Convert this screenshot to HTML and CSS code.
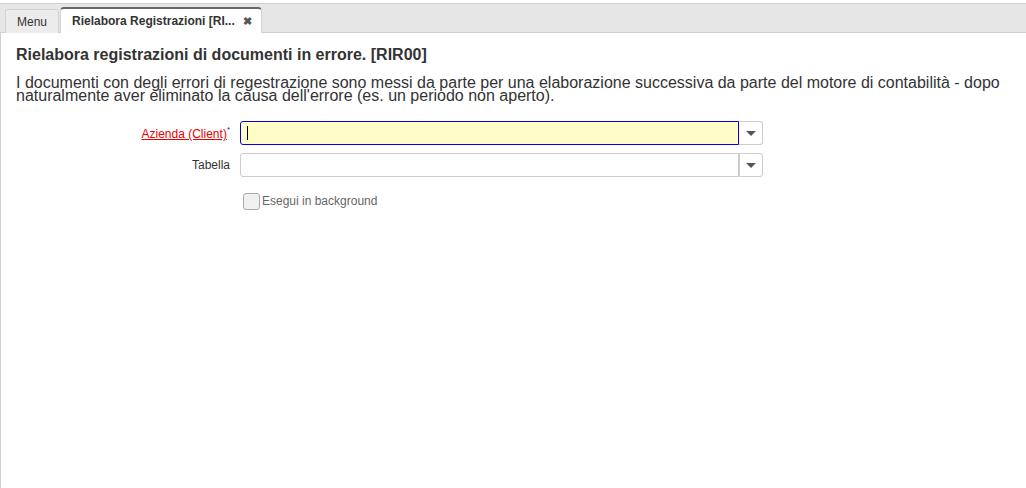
FILE: index.html
```html
<!DOCTYPE html>
<html>
<head>
<meta charset="utf-8">
<link rel="stylesheet" href="styles.css">
</head>
<body>
<div class="tabbar">
  <div class="tab">Menu</div>
  <div class="tab active"><span>Rielabora Registrazioni [RI...</span><span class="close">&#10006;</span></div>
</div>
<div class="content">
  <h1 class="title">Rielabora registrazioni di documenti in errore. [RIR00]</h1>
  <p class="desc">I documenti con degli errori di regestrazione sono messi da parte per una elaborazione successiva da parte del motore di contabilità - dopo naturalmente aver eliminato la causa dell'errore (es. un periodo non aperto).</p>
  <div class="form">
    <div class="row">
      <label class="lbl mandatory"><a>Azienda (Client)</a><sup>*</sup></label>
      <div class="combo focus">
        <div class="input"><span class="caret"></span></div>
        <div class="btn"><span class="arrow"></span></div>
      </div>
    </div>
    <div class="row">
      <label class="lbl">Tabella</label>
      <div class="combo">
        <div class="input"></div>
        <div class="btn"><span class="arrow"></span></div>
      </div>
    </div>
    <div class="row check">
      <span class="lbl"></span>
      <label class="cb"><span class="box"></span>Esegui in background</label>
    </div>
  </div>
</div>
</body>
</html>
```
FILE: styles.css
```css
html, body { margin: 0; padding: 0; height: 100%; }
body {
  font-family: "Liberation Sans", Arial, sans-serif;
  color: #333;
  background: #fff;
  display: flex;
  flex-direction: column;
}
.tabbar {
  margin-top: 3px;
  border-top: 1px solid #d0d0d0;
  background: #e6e6e6;
  display: flex;
  align-items: flex-end;
  padding-left: 5px;
  gap: 1px;
  box-sizing: border-box;
  height: 30px;
  border-bottom: 1px solid #d0d0d0;
}
.tab {
  height: 24px;
  box-sizing: border-box;
  padding: 0 11px;
  background: #ececec;
  border: 1px solid #d3d3d3;
  border-bottom: none;
  border-radius: 3px 3px 0 0;
  font-size: 12px;
  display: flex;
  align-items: center;
  color: #333;
  margin-bottom: -1px;
}
.tab.active {
  height: 26px;
  background: #fff;
  border-top: 2px solid #666;
  border-color: #666 #d3d3d3 #fff #d3d3d3;
  font-weight: bold;
  padding: 0 9px 0 11px;
  width: 202px;
  justify-content: space-between;
  border-radius: 4px 4px 0 0;
}
.close { font-size: 11px; color: #555; }
.content {
  flex: 1;
  border-left: 1px solid #d0d0d0;
  padding: 0 15px;
}
.title {
  font-size: 16px;
  font-weight: bold;
  margin: 13px 0 0;
  line-height: 18px;
}
.desc {
  font-size: 16px;
  line-height: 13px;
  margin: 12px 0 0;
}
.form { margin-top: 19px; display: flex; flex-direction: column; }
.row { display: flex; align-items: center; height: 24px; margin-bottom: 8px; }
.lbl {
  width: 214px;
  text-align: right;
  font-size: 12px;
  padding-right: 10px;
  color: #333;
  flex: none;
}
.lbl.mandatory a { color: #e00; text-decoration: underline; }
.lbl sup { font-size: 8px; color: #333; vertical-align: 6px; }
.combo { display: flex; width: 523px; height: 24px; }
.input {
  flex: 1;
  border: 1px solid #ccc;
  border-radius: 3px 0 0 3px;
  background: #fff;
  display: flex;
  align-items: center;
}
.combo.focus .input {
  border: 1px solid #0000ee;
  background: #fffcc8;
}
.caret { width: 1px; height: 14px; background: #000; margin-left: 6px; }
.btn {
  width: 23px;
  border: 1px solid #ccc;
  border-left: none;
  border-radius: 0 3px 3px 0;
  display: flex;
  align-items: center;
  justify-content: center;
}
.combo:not(.focus) .btn { border-left: 1px solid #ccc; width: 22px; }
.arrow {
  width: 0; height: 0;
  border-left: 5px solid transparent;
  border-right: 5px solid transparent;
  border-top: 5px solid #555;
  margin-top: 1px;
}
.row.check { margin-top: 4px; }
.cb { display: flex; align-items: center; font-size: 12px; color: #666; margin-left: 3px; }
.box {
  width: 15px; height: 15px;
  border: 1px solid #aaa;
  border-radius: 3px;
  background: #f0f0f0;
  margin-right: 2px;
}
```
